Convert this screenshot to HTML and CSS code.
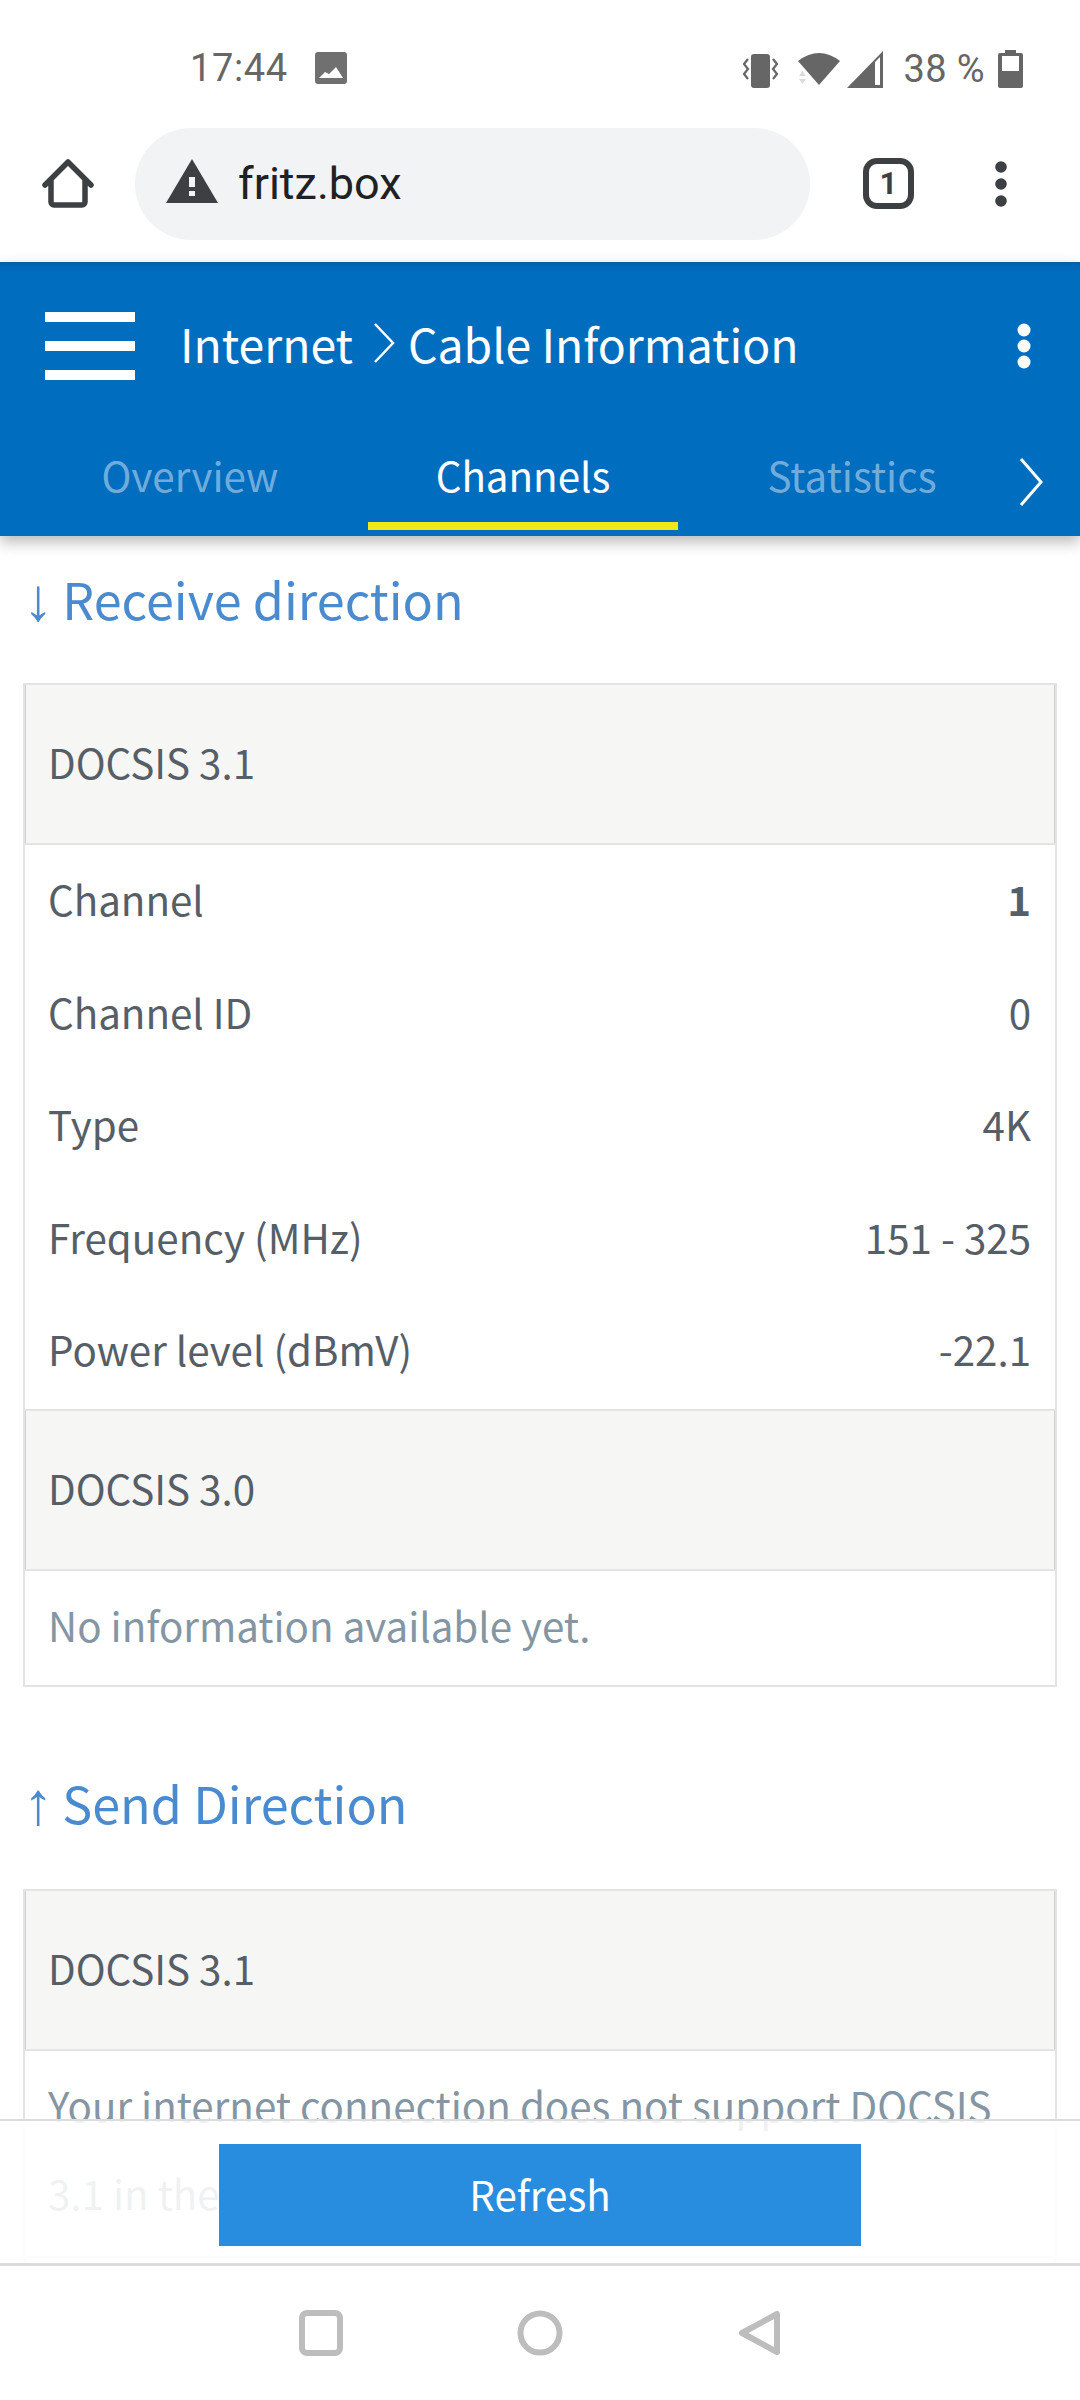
FILE: index.html
```html
<!DOCTYPE html>
<html lang="en">
<head>
<meta charset="utf-8">
<title>Cable Information</title>
<link rel="stylesheet" href="styles.css">
</head>
<body>
<div class="screen">
  <header class="chrome">
    <div class="status">
      <div class="status-left">
        <span class="time">17:44</span>
        <svg class="ic-photo" width="32" height="32" viewBox="0 0 32 32"><rect width="32" height="32" rx="3" fill="#707070"/><path d="M4 26l6-6 4 2 7-7 7 11z" fill="#fff"/></svg>
      </div>
      <div class="status-right">
        <svg class="ic-vib" width="37" height="37" viewBox="0 0 37 37"><rect x="9" y="3" width="19" height="34" rx="3" fill="#666"/><path d="M6 8L2 13l4 5-4 5 4 5M31 8l4 5-4 5 4 5-4 5" fill="none" stroke="#666" stroke-width="2.200"/></svg>
        <svg class="ic-wifi" width="42" height="36" viewBox="0 0 42 36"><path d="M0 10Q21-6 42 10L21 34z" fill="#666"/><path d="M4.500 20L1 25h7zM1 28h7l-3.500 5z" fill="#dcdcdc"/></svg>
        <svg class="ic-signal" width="36" height="37" viewBox="0 0 36 37"><path d="M0 37L36 0v37z" fill="#666"/><path d="M28 11l5-5v28h-5z" fill="#fff"/></svg>
        <span class="batt-text">38 %</span>
        <svg class="ic-batt" width="25" height="38" viewBox="0 0 25 38"><path d="M7 0h11v3h5a2 2 0 012 2v31a2 2 0 01-2 2H2a2 2 0 01-2-2V5a2 2 0 012-2h5z" fill="#666"/><rect x="4" y="6" width="17" height="15" fill="#fff"/></svg>
      </div>
    </div>
    <div class="toolbar">
      <svg class="ic-home" width="52" height="52" viewBox="0 0 52 52"><path d="M3 27L26 4l23 23M9 22v22a3 3 0 003 3h28a3 3 0 003-3V22" fill="none" stroke="#3c4043" stroke-width="5.500" stroke-linecap="round" stroke-linejoin="round"/></svg>
      <div class="omnibox">
        <svg class="ic-warn" width="52" height="44" viewBox="0 0 52 44"><path d="M26 0L0 44h52z" fill="#3c4043"/><path d="M23 18h6v10h-6zM23 32h6v5h-6z" fill="#f1f3f4"/></svg>
        <span class="url">fritz.box</span>
      </div>
      <div class="tabs-count">1</div>
      <svg class="ic-more" width="14" height="46" viewBox="0 0 14 46"><circle cx="7" cy="6" r="5.800" fill="#3c4043"/><circle cx="7" cy="23" r="5.800" fill="#3c4043"/><circle cx="7" cy="40" r="5.800" fill="#3c4043"/></svg>
    </div>
  </header>

  <nav class="appbar">
    <div class="appbar-top">
      <div class="burger"><span></span><span></span><span></span></div>
      <div class="crumb">
        <span>Internet</span>
        <svg class="crumb-chev" width="22" height="40" viewBox="0 0 22 40"><path d="M2 1l18 19L2 39" fill="none" stroke="#fff" stroke-width="2.500"/></svg>
        <span>Cable Information</span>
      </div>
      <svg class="ic-more-w" width="16" height="46" viewBox="0 0 16 46"><circle cx="8" cy="7" r="6.500" fill="#fff"/><circle cx="8" cy="23" r="6.500" fill="#fff"/><circle cx="8" cy="39" r="6.500" fill="#fff"/></svg>
    </div>
    <div class="tabs">
      <div class="tab">Overview</div>
      <div class="tab tab-active">Channels</div>
      <div class="tab">Statistics</div>
      <svg class="tab-chev" width="26" height="48" viewBox="0 0 26 48"><path d="M3 1l20 23L3 47" fill="none" stroke="#fff" stroke-width="3"/></svg>
    </div>
  </nav>

  <main class="content">
    <h2 class="dir-title"><span class="arrow">↓</span> Receive direction</h2>
    <section class="card">
      <div class="card-head">DOCSIS 3.1</div>
      <div class="rows">
        <div class="row"><span>Channel</span><strong>1</strong></div>
        <div class="row"><span>Channel ID</span><span>0</span></div>
        <div class="row"><span>Type</span><span>4K</span></div>
        <div class="row"><span>Frequency (MHz)</span><span>151 - 325</span></div>
        <div class="row"><span>Power level (dBmV)</span><span>-22.1</span></div>
      </div>
      <div class="card-head">DOCSIS 3.0</div>
      <p class="note note-short">No information available yet.</p>
    </section>

    <h2 class="dir-title dir-send"><span class="arrow">↑</span> Send Direction</h2>
    <section class="card">
      <div class="card-head">DOCSIS 3.1</div>
      <p class="note">Your internet connection does not support DOCSIS 3.1 in the upstream direction.</p>
      <div class="card-head">DOCSIS 3.0</div>
    </section>
  </main>

  <div class="action-bar"><button class="refresh">Refresh</button></div>

  <footer class="navbar">
    <svg width="44" height="46" viewBox="0 0 44 46"><rect x="3" y="3" width="38" height="40" rx="5" fill="none" stroke="#bdbdbd" stroke-width="6"/></svg>
    <svg width="46" height="46" viewBox="0 0 46 46"><circle cx="23" cy="23" r="19.500" fill="none" stroke="#bdbdbd" stroke-width="6"/></svg>
    <svg width="44" height="46" viewBox="0 0 44 46"><path d="M40 4v38L5 23z" fill="none" stroke="#bdbdbd" stroke-width="6" stroke-linejoin="round"/></svg>
  </footer>
</div>
</body>
</html>
```

FILE: styles.css
```css
* { box-sizing: border-box; }
html, body { margin: 0; padding: 0; background: #fff; }
.screen {
  position: relative;
  width: 1080px;
  height: 2400px;
  overflow: hidden;
  font-family: "Noto Sans CJK SC", "Noto Sans CJK JP", sans-serif;
  color: #565e67;
}

/* Status bar and browser toolbar */
.chrome { height: 262px; background: #fff; display: flex; flex-direction: column; }
.status {
  height: 127px;
  padding: 50px 57px 0 190px;
  display: flex;
  justify-content: space-between;
  align-items: flex-start;
  font-family: Roboto, sans-serif;
  font-size: 38px;
  line-height: 37px;
  color: #666;
}
.status-left { display: flex; align-items: center; gap: 27px; }
.time { letter-spacing: 0.6px; }
.ic-photo { margin-top: -1px; }
.status-right { display: flex; align-items: center; }
.ic-wifi { margin-left: 19px; }
.ic-signal { margin-left: 7px; }
.batt-text { margin-left: 20px; letter-spacing: 0.4px; }
.ic-batt { margin-left: 13px; }
.toolbar { display: flex; align-items: center; height: 113px; padding-left: 42px; }
.ic-home { flex: none; }
.omnibox {
  width: 675px;
  height: 112px;
  margin: 0 53px 0 41px;
  padding-left: 31px;
  background: #f1f3f4;
  border-radius: 56px;
  display: flex;
  align-items: center;
}
.ic-warn { margin-top: -6px; }
.url { margin-left: 20px; font-family: Roboto, sans-serif; font-size: 45px; color: #202124; }
.tabs-count {
  width: 51px;
  height: 51px;
  border: 6px solid #3c4043;
  border-radius: 14px;
  font-family: Roboto, sans-serif;
  font-size: 31px;
  font-weight: 700;
  line-height: 39px;
  text-align: center;
  color: #3c4043;
}
.ic-more { margin-left: 80px; }

/* Blue application bar */
.appbar {
  position: relative;
  z-index: 2;
  height: 274px;
  background: #016dbf;
  box-shadow: 0 6px 14px rgba(0,0,0,.28), inset 0 10px 8px -8px rgba(0,0,0,.16);
  color: #fff;
}
.appbar-top { height: 168px; display: flex; align-items: center; padding: 0 48px 0 45px; }
.burger { width: 90px; height: 68px; display: flex; flex-direction: column; justify-content: space-between; }
.burger span { display: block; height: 10px; background: #fff; }
.crumb { display: flex; align-items: center; margin: -6px 0 0 45px; font-size: 46.300px; line-height: 60px; }
.crumb-chev { margin: 0 13px 0 20px; }
.ic-more-w { margin-left: auto; }
.tabs { position: relative; height: 106px; }
.tab {
  position: absolute;
  top: 0;
  width: 310px;
  height: 100px;
  padding-top: 20px;
  text-align: center;
  font-size: 40.300px;
  line-height: 50px;
  color: rgba(255,255,255,.45);
}
.tab:nth-child(1) { left: 35px; }
.tab:nth-child(2) { left: 368px; }
.tab:nth-child(3) { left: 697px; }
.tab-active { color: #fff; border-bottom: 8px solid #f5e71a; }
.tab-chev { position: absolute; right: 36px; top: 28px; }

/* Page content */
.content { padding: 0 23px; }
.dir-title {
  margin: 0;
  height: 147px;
  padding-top: 30px;
  font-size: 50.300px;
  line-height: 64px;
  font-weight: 400;
  color: #4a8bd0;
}
.arrow {
  display: inline-block;
  width: 26px;
  margin-right: 2px;
  text-align: center;
  font-family: "Liberation Sans", sans-serif;
  font-size: 60px;
  line-height: 50px;
}
.dir-send { margin-top: 57px; height: 145px; padding-top: 26px; }
.card { border: 2px solid #e4e4e4; border-top: 0; background: #fff; }
.card-head {
  height: 162px;
  padding-left: 23px;
  background: #f6f6f4;
  border-top: 2px solid #e4e4e4;
  border-bottom: 2px solid #e4e4e4;
  font-size: 40.300px;
  line-height: 153px;
  box-shadow: inset 1px 0 0 #cfcfcf, inset -1px 0 0 #cfcfcf;
}
.rows { padding: 0 24px 0 23px; height: 564px; }
.row {
  display: flex;
  justify-content: space-between;
  align-items: center;
  height: 112.500px;
  padding-bottom: 5px;
  font-size: 40.300px;
}
.row strong { font-weight: 700; }
.note {
  margin: 0;
  height: 205px;
  padding: 10px 24px 0 23px;
  font-size: 40.300px;
  line-height: 88px;
  color: #8496a3;
}
.note-short { height: auto; padding: 10px 23px 16px; }

/* Floating action bar and system navigation */
.action-bar {
  position: absolute;
  left: 0;
  right: 0;
  top: 2119px;
  height: 147px;
  padding-top: 23px;
  background: rgba(255,255,255,.87);
  border-top: 2px solid #dcdcdc;
  border-bottom: 3px solid #dcdce0;
  display: flex;
  justify-content: center;
}
.refresh {
  width: 642px;
  height: 102px;
  padding: 0 0 4px;
  border: 0;
  background: #288cdf;
  color: #fff;
  font-family: inherit;
  font-size: 40.300px;
}
.navbar {
  position: absolute;
  left: 0;
  right: 0;
  top: 2266px;
  height: 134px;
  background: #fff;
  display: grid;
  grid-template-columns: repeat(3, 46px);
  column-gap: 173px;
  justify-content: center;
  justify-items: center;
  align-items: center;
}
```
